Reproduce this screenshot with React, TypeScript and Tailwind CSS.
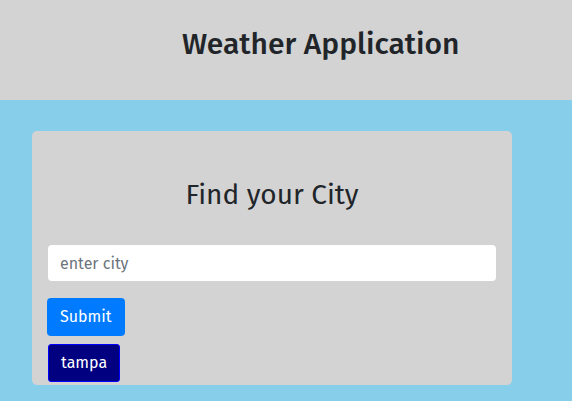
export default function App() {
  return (
    <div className="min-h-[401px] bg-[#87ceeb] font-['Fira_Sans','Lato','Open_Sans',sans-serif] text-[#212529]">
      {/* Header */}
      <header className="h-[100px] bg-[#d3d3d3] pl-[182px] pt-[24px]">
        <h1 className="text-[30px] font-medium leading-[40px]">Weather Application</h1>
      </header>

      {/* Search card */}
      <div className="pl-[32px] pt-[31px]">
        <div className="w-[480px] rounded-[5px] bg-[#d3d3d3] px-[16px] pb-[3px]">
          <h2 className="pt-[44px] text-center text-[28px] leading-[40px]">Find your City</h2>
          <input
            type="text"
            placeholder="enter city"
            className="mt-[30px] block h-[36px] w-full rounded-[4px] bg-white px-[12px] text-[16px] text-[#495057] outline-none placeholder:text-[#6c757d]"
          />
          <button className="mt-[17px] -ml-px block h-[38px] rounded-[4px] bg-[#007bff] px-[13px] text-[16px] text-white">
            Submit
          </button>
          <button className="mt-[8px] block h-[38px] rounded-[3px] border border-[#0000ff] bg-[#000080] px-[12px] text-[16px] text-white">
            tampa
          </button>
        </div>
      </div>
    </div>
  );
}
